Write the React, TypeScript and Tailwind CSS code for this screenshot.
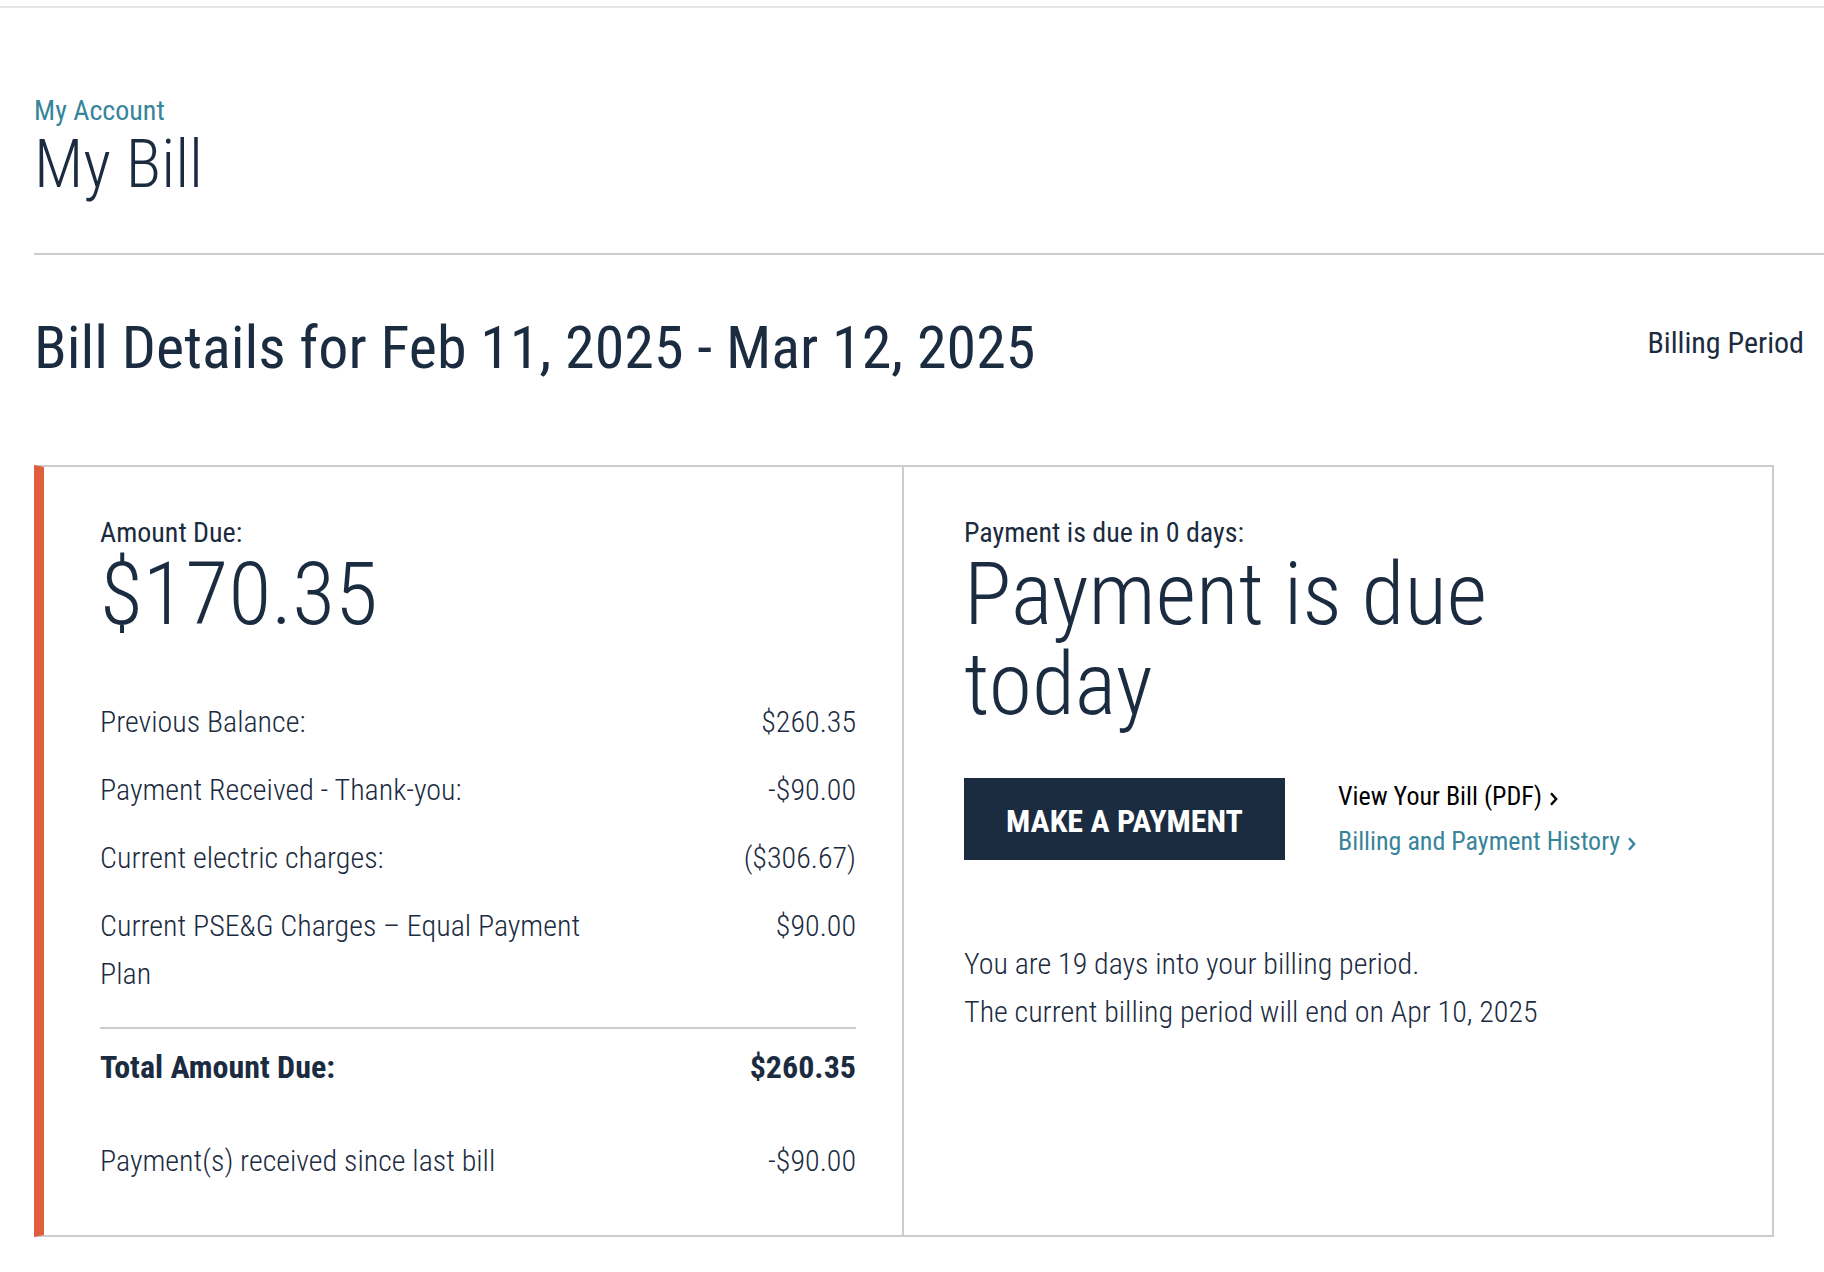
const charges = [
  { label: 'Previous Balance:', amount: '$260.35' },
  { label: 'Payment Received - Thank-you:', amount: '-$90.00' },
  { label: 'Current electric charges:', amount: '($306.67)' },
  { label: 'Current PSE&G Charges – Equal Payment Plan', amount: '$90.00' },
];

function Chevron() {
  return (
    <svg viewBox="0 0 8 14" className="mt-1 ml-2 h-3.5 w-2" fill="none" stroke="currentColor" strokeWidth="2.4" aria-hidden="true">
      <path d="M1 1.2 6.2 7 1 12.8" />
    </svg>
  );
}

function AmountSummary() {
  return (
    <div className="border-2 border-l-10 border-[#cbcccc] border-l-[#df5e3c] pt-[50px] pr-[46px] pb-10 pl-14">
      <h3 className="text-[28px] leading-8">Amount Due:</h3>
      <p className="text-[88px] leading-[90px] font-light">$170.35</p>
      <table className="mt-[49px] w-full text-[30px] leading-12 font-light">
        <tbody>
          {charges.map((row) => (
            <tr key={row.label} className="align-top">
              <th scope="row" className="w-[70%] py-2.5 text-left font-light">{row.label}</th>
              <td className="py-2.5 text-right">{row.amount}</td>
            </tr>
          ))}
          <tr>
            <td colSpan={2} className="h-5" />
          </tr>
          <tr className="border-t-2 border-[#cbcccc] text-[32px] font-bold">
            <th scope="row" className="pt-3.5 pb-9 text-left">Total Amount Due:</th>
            <td className="pt-3.5 pb-9 text-right">$260.35</td>
          </tr>
          <tr>
            <th scope="row" className="py-2.5 text-left font-light">Payment(s) received since last bill</th>
            <td className="py-2.5 text-right">-$90.00</td>
          </tr>
        </tbody>
      </table>
    </div>
  );
}

function PaymentStatus() {
  return (
    <div className="border-2 border-l-0 border-[#cbcccc] px-[60px] pt-[50px] pb-10">
      <h3 className="text-[28px] leading-8">Payment is due in 0 days:</h3>
      <p className="max-w-[640px] text-[88px] leading-[90px] font-light">Payment is due today</p>
      <div className="mt-[45px] flex items-center gap-[53px]">
        <button type="button" className="bg-[#1b2b40] px-[42px] pt-[19px] pb-[15px] text-[32px] leading-12 font-bold text-white">
          MAKE A PAYMENT
        </button>
        <div className="text-[26px] leading-[45px]">
          <a href="#bill" className="flex items-center text-black">View Your Bill (PDF)<Chevron /></a>
          <a href="#history" className="flex items-center text-[#38849a]">Billing and Payment History<Chevron /></a>
        </div>
      </div>
      <p className="mt-19 text-[30px] leading-12 font-light">
        You are 19 days into your billing period.
        <br />
        The current billing period will end on Apr 10, 2025
      </p>
    </div>
  );
}

export default function App() {
  return (
    <div className="min-h-screen overflow-x-hidden bg-white pb-8 font-['Roboto_Condensed','Roboto',sans-serif] text-[#1b2b40]">
      <div className="h-2 border-b-2 border-[#e3e5e9]" />
      <main className="pt-[87px] pl-[34px]">
        <a href="#account" className="block w-fit text-[28px] leading-8 text-[#38849a]">My Account</a>
        <h1 className="text-[66px] leading-[76px] font-light">My Bill</h1>
        <div className="mt-[50px] flex items-center justify-between border-t-2 border-[#cbcccc] pt-14 pr-5">
          <h2 className="text-[60px] leading-[74px]">Bill Details for Feb 11, 2025 - Mar 12, 2025</h2>
          <span className="-mt-3 text-[30px]">Billing Period</span>
        </div>
        <section className="mt-20 mr-[50px] grid grid-cols-2">
          <AmountSummary />
          <PaymentStatus />
        </section>
      </main>
    </div>
  );
}
